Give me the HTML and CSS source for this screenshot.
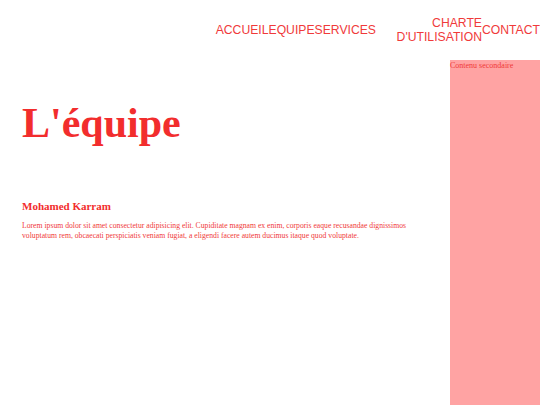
FILE: index.html
```html
<!DOCTYPE html>
<html lang="fr">
<head>
<meta charset="utf-8">
<title>L'équipe</title>
<link rel="stylesheet" href="styles.css">
</head>
<body>
<header class="site-header">
  <nav class="main-nav">
    <a class="nav-link" href="#">Accueil</a>
    <a class="nav-link" href="#">Equipe</a>
    <a class="nav-link" href="#">Services</a>
    <a class="nav-link nav-charte" href="#">Charte d'utilisation</a>
    <a class="nav-link" href="#">Contact</a>
  </nav>
</header>
<div class="layout">
  <main class="content">
    <h1 class="page-title">L'équipe</h1>
    <section class="member">
      <h2 class="member-name">Mohamed Karram</h2>
      <p class="member-bio">Lorem ipsum dolor sit amet consectetur adipisicing elit. Cupiditate magnam ex enim, corporis eaque recusandae dignissimos voluptatum rem, obcaecati perspiciatis veniam fugiat, a eligendi facere autem ducimus itaque quod voluptate.</p>
    </section>
  </main>
  <aside class="sidebar">Contenu secondaire</aside>
</div>
</body>
</html>
```

FILE: styles.css
```css
html, body {
  margin: 0;
  padding: 0;
  background: #ffffff;
}

body {
  color: #f22d2d;
  font-family: "Liberation Serif", "DejaVu Serif", serif;
  min-height: 405px;
  display: flex;
  flex-direction: column;
}

.site-header {
  height: 60px;
  display: flex;
  justify-content: flex-end;
  align-items: center;
}

.main-nav {
  display: flex;
  align-items: center;
  padding-bottom: 1px;
}

.nav-link {
  font-family: "Liberation Sans", Arial, sans-serif;
  font-size: 12.2px;
  line-height: 14px;
  text-transform: uppercase;
  text-decoration: none;
  color: #f03a3a;
}

.nav-charte {
  width: 106px;
  text-align: right;
}

.layout {
  flex: 1;
  display: grid;
  grid-template-columns: 1fr 90px;
}

.content {
  padding: 0 22px;
}

.page-title {
  margin: 42px 0 0;
  font-size: 42px;
  line-height: 1;
  font-weight: 700;
}

.member {
  margin-top: 57px;
}

.member-name {
  margin: 0;
  font-size: 11px;
  line-height: 1;
  font-weight: 700;
}

.member-bio {
  margin: 9px 0 0;
  font-size: 7.7px;
  line-height: 10px;
  color: #f03a3a;
}

.sidebar {
  background: #ffa3a3;
  font-size: 8px;
  line-height: 10px;
  padding-top: 1px;
  color: #f03a3a;
}
```
